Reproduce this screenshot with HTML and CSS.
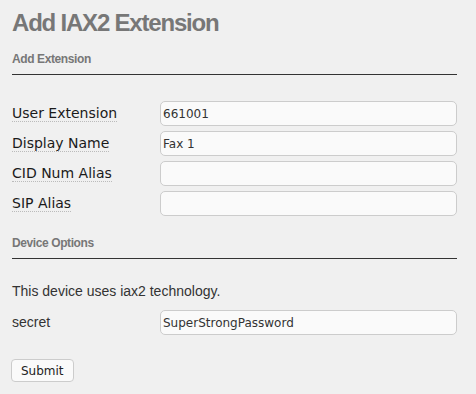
FILE: index.html
```html
<!DOCTYPE html>
<html lang="en">
<head>
    <meta charset="UTF-8">
    <title>Add IAX2 Extension</title>
    <link rel="stylesheet" href="styles.css">
</head>
<body>

    <div class="page">
        <h1 class="title">Add IAX2 Extension</h1>

        <h2 class="section">Add Extension</h2>
        <div class="fields">
            <span class="label"><span class="tip">User Extension</span></span>
            <input class="field" type="text" value="661001">
            <span class="label"><span class="tip">Display Name</span></span>
            <input class="field" type="text" value="Fax 1">
            <span class="label"><span class="tip">CID Num Alias</span></span>
            <input class="field" type="text" value="">
            <span class="label"><span class="tip">SIP Alias</span></span>
            <input class="field" type="text" value="">
        </div>

        <h2 class="section">Device Options</h2>
        <p class="note">This device uses iax2 technology.</p>
        <div class="fields">
            <span class="label plain">secret</span>
            <input class="field" type="text" value="SuperStrongPassword">
        </div>

        <button class="submit">Submit</button>
    </div>

</body>
</html>
```

FILE: styles.css
```css
body {
    margin: 0;
    background-color: #f0f0f0;
    font-family: "Liberation Sans", Arial, sans-serif;
    color: #333;
}

.page {
    width: 445px;
    padding: 9px 0 0 12px;
}

.title {
    margin: 0;
    font-size: 24px;
    line-height: 28px;
    letter-spacing: -1.2px;
    font-weight: bold;
    color: #777;
}

.section {
    margin: 15px 0 0 0;
    padding-bottom: 8px;
    border-bottom: 1px solid #333;
    font-size: 12px;
    line-height: 14px;
    letter-spacing: -0.4px;
    font-weight: bold;
    color: #777;
}

.section + .fields {
    margin-top: 26px;
}

.fields + .section {
    margin-top: 20px;
}

.fields {
    display: grid;
    grid-template-columns: 148px 297px;
    row-gap: 5px;
}

.label {
    font-family: "DejaVu Sans", Verdana, sans-serif;
    font-size: 14px;
    line-height: 25px;
    color: #1a1a1a;
}

.label.plain {
    font-family: "Liberation Sans", Arial, sans-serif;
    color: #333;
}

.tip {
    border-bottom: 1px dotted #bbb;
}

.field {
    box-sizing: border-box;
    width: 297px;
    height: 25px;
    margin: 0;
    padding: 0 2px;
    border: 1px solid #ccc;
    border-radius: 5px;
    background-color: #fafafa;
    font-family: "DejaVu Sans", Verdana, sans-serif;
    font-size: 12px;
    color: #333;
}

.note {
    margin: 23px 0 10px 0;
    font-size: 14px;
    line-height: 18px;
}

.submit {
    display: block;
    margin: 24px 0 0 -1px;
    height: 23px;
    padding: 0 9px;
    border: 1px solid #ccc;
    border-radius: 4px;
    background-color: #fafafa;
    font-family: "DejaVu Sans", Verdana, sans-serif;
    font-size: 12px;
    color: #222;
}
```
